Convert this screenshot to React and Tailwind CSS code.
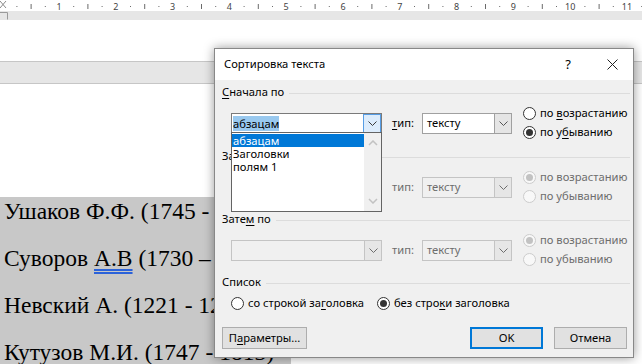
import React from 'react';

const ui = { fontFamily: '"Noto Sans", "Liberation Sans", sans-serif' };
const serif = { fontFamily: '"Liberation Serif", "Times New Roman", serif' };

function Chevron({ color = '#555555' }) {
  return (
    <svg width="9" height="5" viewBox="0 0 9 5">
      <path d="M0.5 0.5 L4.5 4.5 L8.5 0.5" fill="none" stroke={color} strokeWidth="1" />
    </svg>
  );
}

function Ruler() {
  const unit = 56.8;
  const start = 2.2;
  const marks = [];
  for (let n = 0; n < 12; n++) {
    const x0 = start + unit * n;
    marks.push(<rect key={`a${n}`} x={x0 + unit / 4} y="6" width="1" height="1" fill="#6b6b6b" />);
    marks.push(<rect key={`b${n}`} x={x0 + unit / 2} y="4" width="1" height="5" fill="#6b6b6b" />);
    marks.push(<rect key={`c${n}`} x={x0 + (unit * 3) / 4} y="6" width="1" height="1" fill="#6b6b6b" />);
    if (n > 0) {
      marks.push(
        <text key={`t${n}`} x={x0} y="9.5" fontSize="9" textAnchor="middle" fill="#444444" style={ui}>
          {n}
        </text>
      );
    }
  }
  return (
    <svg width="642" height="11" className="block">
      <rect width="642" height="11" fill="#ffffff" />
      {marks}
      <path d="M0 1 L6 8 M6 1 L0 8" stroke="#8a8a8a" strokeWidth="1" />
    </svg>
  );
}

function U({ children }) {
  return <span className="underline decoration-1 underline-offset-[2px]">{children}</span>;
}

function Combo({ width, variant, children }) {
  if (variant === 'focus') {
    return (
      <div className="flex h-[21px] border border-[#7a7a7a] bg-white" style={{ width }}>
        <div className="flex flex-1 items-center pl-[1px]">{children}</div>
        <div className="flex w-[18px] items-center justify-center border border-[#569de5] bg-[#dcecfc]">
          <Chevron color="#3a3a3a" />
        </div>
      </div>
    );
  }
  if (variant === 'disabled') {
    return (
      <div className="flex h-[21px] border border-[#c4c4c4] bg-[#f0f0f0]" style={{ width }}>
        <div className="flex flex-1 items-center pl-[4px] text-[#6d6d6d]">{children}</div>
        <div className="flex w-[17px] items-center justify-center border-l border-[#c4c4c4] bg-[#e6e6e6]">
          <Chevron color="#6d6d6d" />
        </div>
      </div>
    );
  }
  return (
    <div className="flex h-[21px] border border-[#a0a0a0] bg-white" style={{ width }}>
      <div className="flex flex-1 items-center pl-[4px]">{children}</div>
      <div className="flex w-[17px] items-center justify-center border-l border-[#a0a0a0] bg-[#e5e5e5]">
        <Chevron color="#555555" />
      </div>
    </div>
  );
}

function Radio({ checked, disabled, children }) {
  return (
    <div className="flex h-[19px] items-center gap-[4px] whitespace-nowrap">
      <span
        className={
          disabled
            ? 'flex h-[13px] w-[13px] shrink-0 items-center justify-center rounded-full border border-[#cccccc] bg-[#f8f8f8]'
            : 'flex h-[13px] w-[13px] shrink-0 items-center justify-center rounded-full border border-[#333333] bg-white'
        }
      >
        {checked && <span className={disabled ? 'h-[7px] w-[7px] rounded-full bg-[#c2c2c2]' : 'h-[7px] w-[7px] rounded-full bg-[#333333]'} />}
      </span>
      <span className={disabled ? 'text-[#6d6d6d]' : 'text-black'}>{children}</span>
    </div>
  );
}

function GroupLabel({ children }) {
  return (
    <div className="flex h-[16px] items-center whitespace-nowrap">
      <span>{children}</span>
      <div className="ml-[5px] mt-[2px] h-px flex-1 bg-[#dcdcdc]" />
    </div>
  );
}

function SortGroup({ label, active, height }) {
  return (
    <div style={{ height }}>
      <GroupLabel>{label}</GroupLabel>
      <div className="mt-[4px] flex h-[38px] items-center whitespace-nowrap pl-[9px]">
        {active ? (
          <Combo width={151} variant="focus">
            <span className="bg-[#99c9ef] leading-[15px]">абзацам</span>
          </Combo>
        ) : (
          <Combo width={151} variant="disabled" />
        )}
        <span className={active ? 'ml-[10px] w-[30px]' : 'ml-[10px] w-[30px] text-[#6d6d6d]'}>
          {active ? <><U>т</U>ип:</> : 'тип:'}
        </span>
        <Combo width={90} variant={active ? 'normal' : 'disabled'}>
          тексту
        </Combo>
        <div className="ml-[11px] flex flex-col">
          <Radio disabled={!active} checked={!active}>
            {active ? <>по <U>в</U>озрастанию</> : 'по возрастанию'}
          </Radio>
          <Radio disabled={!active} checked={active}>
            {active ? <>по у<U>б</U>ыванию</> : 'по убыванию'}
          </Radio>
        </div>
      </div>
    </div>
  );
}

function DropList() {
  return (
    <div className="absolute left-[16px] top-[83px] flex h-[80px] w-[151px] border border-[#646464] bg-white">
      <div className="flex-1 pt-[1px]">
        <div className="h-[13px] bg-[#0078d7] pl-[1px] leading-[13px] text-white">абзацам</div>
        <div className="h-[13px] pl-[1px] leading-[13px]">Заголовки</div>
        <div className="h-[13px] pl-[1px] leading-[13px]">полям 1</div>
      </div>
      <div className="flex w-[17px] flex-col items-center justify-between bg-[#f0f0f0] py-[7px]">
        <svg width="10" height="6" viewBox="0 0 10 6">
          <path d="M1 5 L5 1 L9 5" fill="none" stroke="#c2c2c2" strokeWidth="1.5" />
        </svg>
        <svg width="10" height="6" viewBox="0 0 10 6">
          <path d="M1 1 L5 5 L9 1" fill="none" stroke="#c2c2c2" strokeWidth="1.5" />
        </svg>
      </div>
    </div>
  );
}

function Button({ width, primary, children }) {
  return (
    <div
      className={
        primary
          ? 'flex h-[22px] items-center justify-center border-2 border-[#0078d7] bg-[#e1e1e1]'
          : 'flex h-[22px] items-center justify-center border border-[#adadad] bg-[#e1e1e1]'
      }
      style={{ width }}
    >
      {children}
    </div>
  );
}

function Dialog() {
  return (
    <div
      className="absolute left-[214px] top-[48px] h-[310px] w-[420px] border border-[#888888] bg-[#f0f0f0] text-[11.2px] text-black shadow-[0_0_10px_rgba(0,0,0,0.4)]"
      style={ui}
    >
      <div className="flex h-[31px] items-center bg-white pl-[9px]">
        <span className="flex-1">Сортировка текста</span>
        <span className="mr-[36px] text-[13px]">?</span>
        <svg width="11" height="11" viewBox="0 0 11 11" className="mr-[15px]">
          <path d="M0.5 0.5 L10.5 10.5 M10.5 0.5 L0.5 10.5" stroke="#222222" strokeWidth="1" />
        </svg>
      </div>
      <div className="pl-[7px] pr-[3px] pt-[4px]">
        <SortGroup label={<><U>С</U>начала по</>} active height={64} />
        <SortGroup label="Затем по" height={63} />
        <SortGroup label={<>Зате<U>м</U> по</>} height={63} />
        <GroupLabel>Список</GroupLabel>
        <div className="mt-[4px] flex h-[19px] items-center gap-[13px] pl-[9px]">
          <Radio>со строкой за<U>г</U>оловка</Radio>
          <Radio checked>без стро<U>к</U>и заголовка</Radio>
        </div>
        <div className="mt-[14px] flex items-center">
          <Button width={85}>
            <span>П<U>а</U>раметры...</span>
          </Button>
          <div className="ml-auto mr-[3px] flex gap-[11px]">
            <Button width={73} primary>OK</Button>
            <Button width={73}>Отмена</Button>
          </div>
        </div>
      </div>
      <DropList />
    </div>
  );
}

const lines = [
  { text: 'Ушаков Ф.Ф. (1745 - 1817)', w: 330 },
  { text: <>Суворов <span className="underline decoration-double decoration-[#2b62d9] underline-offset-[3px]">А.В</span> (1730 – 1800)</>, w: 330 },
  { text: 'Невский А. (1221 - 1263)', w: 330 },
  { text: 'Кутузов М.И. (1747 - 1813)', w: 291 },
];

export default function App() {
  return (
    <div className="relative h-[364px] w-[642px] overflow-hidden bg-white">
      <Ruler />
      <div className="relative h-[9px] bg-[#e6e6e6]">
        <svg width="9" height="9" className="absolute left-0 top-0">
          <path d="M0 1.5 H7.5 V8.5" fill="none" stroke="#9a9a9a" strokeWidth="1" />
        </svg>
      </div>
      <div className="h-[41px]" />
      <div className="h-[23px] border-y border-[#c6c6c6] bg-[#e6e6e6]" />
      <div className="h-[113px]" />
      <div className="text-[23.5px] text-black" style={serif}>
        {lines.map((l, i) => (
          <div key={i} className="h-[47px] overflow-hidden whitespace-nowrap bg-[#c8c8c8] pl-[4px] pt-[1px] leading-[26px]" style={{ width: l.w }}>
            {l.text}
          </div>
        ))}
      </div>
      <Dialog />
    </div>
  );
}
